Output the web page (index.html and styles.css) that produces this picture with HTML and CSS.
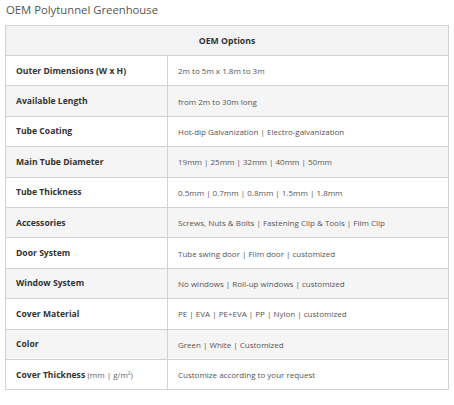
FILE: index.html
```html
<!DOCTYPE html>
<html>
<head>
<meta charset="utf-8">
<link rel="stylesheet" href="styles.css">
</head>
<body>
<h1 class="title">OEM Polytunnel Greenhouse</h1>
<table class="spec">
  <colgroup><col class="c1"><col class="c2"></colgroup>
  <thead>
    <tr><th colspan="2">OEM Options</th></tr>
  </thead>
  <tbody>
    <tr><td class="k">Outer Dimensions (W x H)</td><td>2m to 5m x 1.8m to 3m</td></tr>
    <tr><td class="k">Available Length</td><td>from 2m to 30m long</td></tr>
    <tr><td class="k">Tube Coating</td><td>Hot-dip Galvanization | Electro-galvanization</td></tr>
    <tr><td class="k">Main Tube Diameter</td><td>19mm | 25mm | 32mm | 40mm | 50mm</td></tr>
    <tr><td class="k">Tube Thickness</td><td>0.5mm | 0.7mm | 0.8mm | 1.5mm | 1.8mm</td></tr>
    <tr><td class="k">Accessories</td><td>Screws, Nuts &amp; Bolts | Fastening Clip &amp; Tools | Film Clip</td></tr>
    <tr><td class="k">Door System</td><td>Tube swing door | Film door | customized</td></tr>
    <tr><td class="k">Window System</td><td>No windows | Roll-up windows | customized</td></tr>
    <tr><td class="k">Cover Material</td><td>PE | EVA | PE+EVA | PP | Nylon | customized</td></tr>
    <tr><td class="k">Color</td><td>Green | White | Customized</td></tr>
    <tr><td class="k">Cover Thickness <span class="unit">(mm | g/m²)</span></td><td>Customize according to your request</td></tr>
  </tbody>
</table>
</body>
</html>
```
FILE: styles.css
```css
body {
  margin: 0;
  padding: 0 5px;
  background: #fff;
  font-family: "Open Sans", "DejaVu Sans", sans-serif;
  color: #333;
}
.title {
  margin: 0;
  padding: 1px 0 0 1px;
  height: 25px;
  font-size: 11.3px;
  font-weight: normal;
  color: #555;
  line-height: 17px;
  box-sizing: border-box;
}
.spec {
  width: 444px;
  border-collapse: collapse;
  table-layout: fixed;
  border: 1px solid #d2d2d2;
}
.c1 { width: 162px; }
.spec th {
  background: #f3f3f3;
  height: 29px;
  font-size: 8.7px;
  font-weight: bold;
  color: #333;
  text-align: center;
  padding: 0;
  border: 1px solid #d2d2d2;
}
.spec td {
  height: 29.4px;
  padding: 0 0 0 10px;
  font-size: 8px;
  color: #555;
  border: 1px solid #d2d2d2;
  vertical-align: middle;
  white-space: nowrap;
}
.spec td.k {
  font-size: 8.6px;
  font-weight: bold;
  color: #333;
}
.spec tbody tr:nth-child(even) td {
  background: #f5f5f5;
}
.unit {
  font-weight: normal;
  font-size: 8px;
  color: #666;
}
```
